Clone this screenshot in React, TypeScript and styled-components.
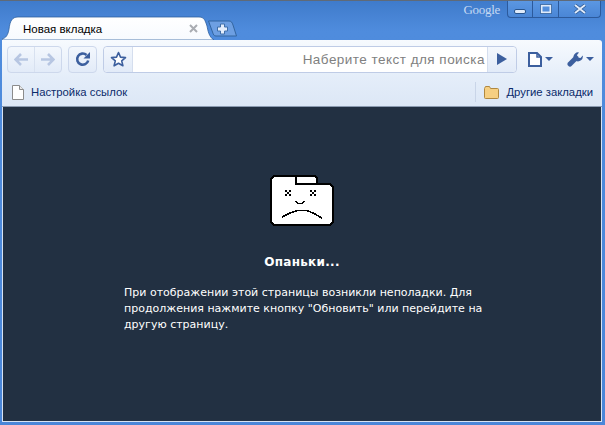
import styled, { createGlobalStyle } from "styled-components";

const GlobalStyle = createGlobalStyle`
  html, body {
    margin: 0;
    padding: 0;
    overflow: hidden;
  }
`;

const Window = styled.div`
  width: 605px;
  height: 425px;
  box-sizing: border-box;
  display: flex;
  flex-direction: column;
  padding: 0 3px 3px 2px;
  border-top: 1px solid #5f6a78;
  background: linear-gradient(#3f7bcb 0, #4f8cdd 30px, #4a86d8 100%);
  font-family: "Liberation Sans", Arial, sans-serif;
`;

const TitleBar = styled.div`
  height: 39px;
  flex: none;
  display: flex;
`;

const TabStrip = styled.div`
  flex: 1;
  display: flex;
  align-items: flex-end;
`;

const Tab = styled.div`
  position: relative;
  width: 212px;
  height: 24px;
  margin-right: -6px;
  font-size: 11.5px;
  color: #000;
  display: flex;
  align-items: center;
  padding: 1px 16px 0 21px;
  box-sizing: border-box;
  justify-content: space-between;

  svg.shape {
    position: absolute;
    left: 0;
    top: 0;
  }

  span, svg.close {
    position: relative;
  }
`;

const NewTab = styled.div`
  width: 29px;
  height: 17px;
  margin-bottom: 3px;
  display: flex;
`;

const Brand = styled.div`
  font-family: "Liberation Serif", serif;
  font-size: 13px;
  letter-spacing: -0.3px;
  color: #c5d9f3;
  padding: 1px 7px 0 0;
`;

const WindowControls = styled.div`
  display: flex;
  height: 16px;
  margin-right: 1px;
  border: 1px solid #2c5a9c;
  border-top: none;
  border-radius: 0 0 4px 4px;
  background: linear-gradient(#5b97e2, #4a86d6);
`;

const WindowButton = styled.div<{ $w: number; $last?: boolean }>`
  width: ${(p) => p.$w}px;
  display: flex;
  align-items: center;
  justify-content: center;
  border-right: ${(p) => (p.$last ? "none" : "1px solid #2c5a9c")};
`;

const Toolbar = styled.div`
  height: 38px;
  flex: none;
  display: flex;
  align-items: center;
  padding: 0 6px 0 5px;
  box-sizing: border-box;
  background: linear-gradient(#f7fafe, #e4edf9);
  border-radius: 0 3px 0 0;
`;

const ButtonGroup = styled.div<{ $w: number }>`
  width: ${(p) => p.$w}px;
  height: 27px;
  flex: none;
  box-sizing: border-box;
  display: flex;
  margin-right: 6px;
  border: 1px solid #cdd8ec;
  border-radius: 4px;
  background: linear-gradient(#f3f7fd, #e2ebf8);
`;

const ToolButton = styled.div<{ $divider?: boolean }>`
  flex: 1;
  display: flex;
  align-items: center;
  justify-content: center;
  border-right: ${(p) => (p.$divider ? "1px solid #d8e1f0" : "none")};
`;

const Omnibox = styled.div`
  width: 414px;
  height: 27px;
  flex: none;
  box-sizing: border-box;
  display: flex;
  border: 1px solid #bfcce6;
  border-radius: 4px;
  background: #fff;
`;

const StarCell = styled.div`
  width: 28px;
  flex: none;
  display: flex;
  align-items: center;
  justify-content: center;
  border-right: 1px solid #d5deee;
  background: linear-gradient(#f3f7fd, #e2ebf8);
  border-radius: 4px 0 0 4px;
`;

const Placeholder = styled.div`
  flex: 1;
  text-align: right;
  line-height: 25px;
  padding-right: 2px;
  font-size: 13.5px;
  letter-spacing: 0.47px;
  color: #808080;
  overflow: hidden;
  white-space: nowrap;
`;

const GoCell = styled.div`
  width: 28px;
  flex: none;
  display: flex;
  align-items: center;
  justify-content: center;
  border-left: 1px solid #d5deee;
  background: linear-gradient(#f3f7fd, #e2ebf8);
  border-radius: 0 4px 4px 0;
`;

const MenuIcons = styled.div`
  display: flex;
  align-items: center;
  gap: 14px;
  margin-left: 11px;
`;

const MenuIcon = styled.div`
  display: flex;
  align-items: center;
  gap: 3px;
`;

const Caret = styled.div`
  width: 0;
  height: 0;
  border-left: 4px solid transparent;
  border-right: 4px solid transparent;
  border-top: 4px solid #3c5f9e;
`;

const BookmarkBar = styled.div`
  height: 29px;
  flex: none;
  display: flex;
  align-items: center;
  justify-content: space-between;
  padding: 0 9px 0 10px;
  box-sizing: border-box;
  background: linear-gradient(#e4edf9, #dce7f6);
  border-bottom: 1px solid #8a9ab0;
  font-size: 11.3px;
  color: #0a2a6b;
`;

const Bookmark = styled.div`
  display: flex;
  align-items: center;
  gap: 7px;
`;

const OtherBookmarks = styled(Bookmark)`
  height: 20px;
  padding-left: 8px;
  border-left: 1px solid #c9d5e8;
`;

const Content = styled.main`
  flex: 1;
  background: #223042;
  display: flex;
  flex-direction: column;
  align-items: center;
  color: #fff;
  font-family: "DejaVu Sans", Verdana, sans-serif;
  padding-top: 68px;
  border: 1px solid #d8e3f3;
  border-top: none;
  min-height: 0;
`;

const FolderIcon = styled.svg`
  flex: none;
  display: block;
`;

const Heading = styled.h1`
  margin: 28px 0 0;
  font-size: 12px;
  line-height: 16px;
  font-weight: bold;
  letter-spacing: 0.3px;
`;

const Message = styled.p`
  width: 364px;
  align-self: flex-start;
  margin: 15px 0 0 121px;
  font-size: 11px;
  line-height: 16px;
`;

function SadFolder() {
  return (
    <FolderIcon width="64" height="51" viewBox="0 0 64 51" shapeRendering="crispEdges">
      <path
        d="M3 0H46v1h1v1h1v6h13v1h1v1h1v1h1V48h-1v1h-1v1h-1v1H3v-1H2v-1H1v-1H0V3h1V2h1V1h1z"
        fill="#000"
      />
      <path d="M4 2H25V10H60v1h1v1h1V47h-1v1h-1v1H4v-1H3v-1H2V4h1V3h1z" fill="#fff" />
      <path d="M27 2H45v1h1v5H27z" fill="#fff" />
      <g fill="#000">
        <path d="M15 15h2v2h-2zM19 15h2v2h-2zM17 17h2v2h-2zM15 19h2v2h-2zM19 19h2v2h-2z" />
        <path d="M40 15h2v2h-2zM44 15h2v2h-2zM42 17h2v2h-2zM40 19h2v2h-2zM44 19h2v2h-2z" />
        <path d="M25 26h2v1h1v1h4v-1h1v-1h2v1h-1v1h-1v1h-6v-1h-1v-1h-1z" />
      </g>
      <path d="M12 42L20 38L27 35.5H37L44 38.5L52 43" fill="none" stroke="#000" strokeWidth="1.6" />
    </FolderIcon>
  );
}

export default function App() {
  return (
    <>
      <GlobalStyle />
      <Window>
        <TitleBar>
          <TabStrip>
            <Tab>
              <svg className="shape" width="212" height="24" viewBox="0 0 212 24">
                <defs>
                  <linearGradient id="tabFill" x1="0" x2="0" y1="0" y2="1">
                    <stop offset="0" stopColor="#fff" />
                    <stop offset="1" stopColor="#f7fafe" />
                  </linearGradient>
                </defs>
                <path
                  d="M0 24V23C4 22 6 19 7 13C8 5 10 1 16 1H197C202 1 203 4 205 10C206 15 207 21 212 24Z"
                  fill="url(#tabFill)"
                  stroke="#2f619f"
                  strokeWidth="0.8"
                />
              </svg>
              <span>Новая вкладка</span>
              <svg className="close" width="9" height="9" viewBox="0 0 9 9">
                <path d="M1 1l7 7M8 1l-7 7" stroke="#a9acb2" strokeWidth="2" />
              </svg>
            </Tab>
            <NewTab>
              <svg width="29" height="17" viewBox="0 0 29 17">
                <path d="M0.5 1H21C23 1 24 2 25 5L28.500 16H8C6 16 5.500 15 4.500 12Z" fill="#6d9fe2" stroke="#33659f" />
                <path d="M12.500 4h4v3h3v4h-3v3h-4v-3h-3V7h3z" fill="#e3edfb" stroke="#3f6ea8" />
              </svg>
            </NewTab>
          </TabStrip>
          <Brand>Google</Brand>
          <WindowControls>
            <WindowButton $w={24}>
              <svg width="12" height="14" viewBox="0 0 12 14"><rect x="0.5" y="7.5" width="11" height="4" rx="1.5" fill="#e0ebfa" stroke="#28558f" /></svg>
            </WindowButton>
            <WindowButton $w={25}>
              <svg width="12" height="10"><rect x="1.5" y="1.5" width="9" height="7" fill="none" stroke="#e0ebfa" strokeWidth="2" /><rect x="0.5" y="0.5" width="11" height="9" fill="none" stroke="#28558f" strokeOpacity=".7" /></svg>
            </WindowButton>
            <WindowButton $w={41} $last>
              <svg width="14" height="10" viewBox="0 0 14 10"><path d="M2 1l10 8M12 1l-10 8" stroke="#28558f" strokeWidth="3.4" /><path d="M2 1l10 8M12 1l-10 8" stroke="#e0ebfa" strokeWidth="2" /></svg>
            </WindowButton>
          </WindowControls>
        </TitleBar>
        <Toolbar>
          <ButtonGroup $w={55}>
            <ToolButton $divider>
              <svg width="14" height="13" viewBox="0 0 14 13"><path d="M7 1L1.5 6.5 7 12M2 6.5h12" fill="none" stroke="#b7c6e2" strokeWidth="2.6" /></svg>
            </ToolButton>
            <ToolButton>
              <svg width="14" height="13" viewBox="0 0 14 13"><path d="M7 1l5.5 5.5L7 12M12 6.5H0" fill="none" stroke="#b7c6e2" strokeWidth="2.6" /></svg>
            </ToolButton>
          </ButtonGroup>
          <ButtonGroup $w={29}>
            <ToolButton>
              <svg width="16" height="16" viewBox="0 0 16 16"><path d="M13.2 9.5A5.6 5.6 0 1 1 11.5 4" fill="none" stroke="#3c5f9e" strokeWidth="2.6" /><path d="M15 1v6.5H8.5z" fill="#3c5f9e" /></svg>
            </ToolButton>
          </ButtonGroup>
          <Omnibox>
            <StarCell>
              <svg width="17" height="16" viewBox="0 0 17 16"><path d="M8.5 1.5l2 4.6 5 .5-3.800 3.300 1.200 4.900-4.400-2.600-4.400 2.600 1.200-4.900L1.5 6.600l5-.5z" fill="#fff" stroke="#3c5f9e" strokeWidth="1.6" strokeLinejoin="round" /></svg>
            </StarCell>
            <Placeholder>Наберите текст для поиска</Placeholder>
            <GoCell>
              <svg width="10" height="12"><path d="M0 0l10 6-10 6z" fill="#3c5f9e" /></svg>
            </GoCell>
          </Omnibox>
          <MenuIcons>
            <MenuIcon>
              <svg width="14" height="15" viewBox="0 0 14 15"><path d="M1 1h8l4 4v9H1z" fill="#fff" stroke="#3c5f9e" strokeWidth="2" /><path d="M9 1v4h4" fill="none" stroke="#3c5f9e" strokeWidth="1.5" /></svg>
              <Caret />
            </MenuIcon>
            <MenuIcon>
              <svg width="16" height="15" viewBox="0 0 16 15">
                <path d="M3 12L9 6" stroke="#3c5f9e" strokeWidth="5" strokeLinecap="round" />
                <path d="M6.5 5A4.500 4.500 0 0 1 12 .5L10 3l.5 2.500 3 .5L15.800 3.500A5 5 0 0 1 9 9z" fill="#3c5f9e" />
              </svg>
              <Caret />
            </MenuIcon>
          </MenuIcons>
        </Toolbar>
        <BookmarkBar>
          <Bookmark>
            <svg width="12" height="15" viewBox="0 0 12 15"><path d="M.5.5h7l4 4v10H.5z" fill="#fff" stroke="#8c8c8c" /><path d="M7.500.5v4h4" fill="#e8e8e8" stroke="#8c8c8c" /></svg>
            <span>Настройка ссылок</span>
          </Bookmark>
          <OtherBookmarks>
            <svg width="15" height="13" viewBox="0 0 15 13"><path d="M.5 2.500l1-2h4l1 2h7a1 1 0 0 1 1 1v8a1 1 0 0 1-1 1h-12a1 1 0 0 1-1-1z" fill="#f6cf82" stroke="#b08840" /></svg>
            <span>Другие закладки</span>
          </OtherBookmarks>
        </BookmarkBar>
        <Content>
          <SadFolder />
          <Heading>Опаньки...</Heading>
          <Message>
            При отображении этой страницы возникли неполадки. Для продолжения нажмите кнопку "Обновить" или перейдите на другую страницу.
          </Message>
        </Content>
      </Window>
    </>
  );
}
